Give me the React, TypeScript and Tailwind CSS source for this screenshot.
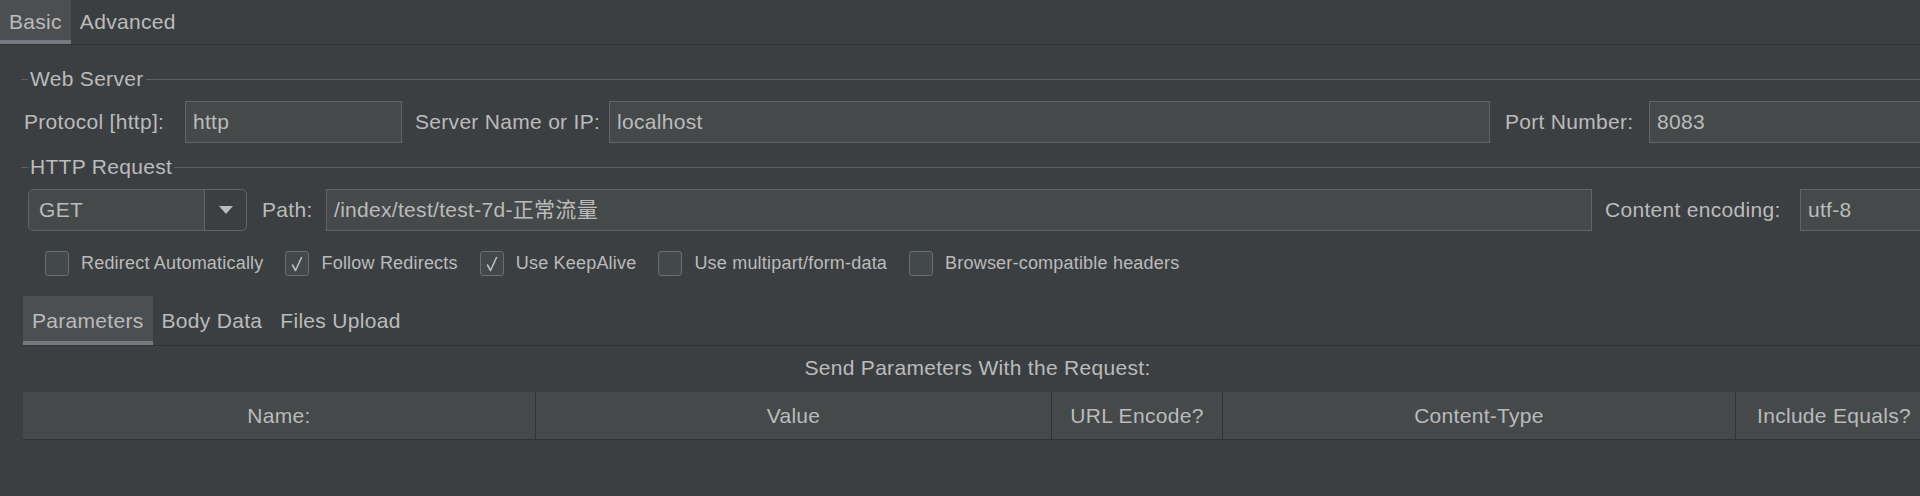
import React from 'react';

const line = 'bg-[#5d6062]';

function Field({ value, className = '' }: { value: string; className?: string }) {
  return (
    <div className={`h-[42px] border border-[#646464] bg-[#45494a] pl-[7px] flex items-center overflow-hidden whitespace-nowrap ${className}`}>
      {value}
    </div>
  );
}

function Titled({ title }: { title: string }) {
  return (
    <div className="flex items-center h-[24px] pl-[21px]">
      <div className={`w-[7px] h-px ${line}`} />
      <span className="px-[2px] leading-[24px]">{title}</span>
      <div className={`flex-1 h-px ${line}`} />
    </div>
  );
}

function Check({ label, checked }: { label: string; checked?: boolean }) {
  return (
    <div className="flex items-center gap-[12px]">
      <div className="w-[24px] h-[25px] rounded-[3px] border border-[#6b6e70] bg-[#43494a] flex items-center justify-center">
        {checked && (
          <svg width="16" height="18" viewBox="0 0 16 18" fill="none">
            <path d="M3.5 10 L6.5 15.5 L12.5 2.5" stroke="#bcbcbc" strokeWidth="1.6" strokeLinecap="round" strokeLinejoin="round" />
          </svg>
        )}
      </div>
      <span className="text-[18px] tracking-[0.2px]">{label}</span>
    </div>
  );
}

function Tab({ label, active }: { label: string; active?: boolean }) {
  return (
    <div
      className={`h-full px-[9px] flex items-center ${
        active ? 'bg-[#4b4f52] border-b-[4px] border-[#747a80] pt-[4px]' : ''
      }`}
    >
      {label}
    </div>
  );
}

export default function App() {
  const columns = [
    { name: 'Name:', w: 'w-[512px]' },
    { name: 'Value', w: 'w-[516px]' },
    { name: 'URL Encode?', w: 'w-[171px]' },
    { name: 'Content-Type', w: 'w-[513px]' },
    { name: 'Include Equals?', w: 'flex-1' },
  ];

  return (
    <div className="w-[1920px] h-[496px] overflow-hidden bg-[#3c3f41] text-[#bbbbbb] text-[21px] tracking-[0.3px] font-['Liberation_Sans','Noto_Sans_CJK_SC',sans-serif]">
      <div className="w-[1932px]">
        {/* top tabs */}
        <div className="h-[45px] flex border-b border-[#303234]">
          <Tab label="Basic" active />
          <Tab label="Advanced" />
        </div>

        <div className="mt-[22px]">
          <Titled title="Web Server" />
        </div>

        <div className="mt-[10px] flex items-center pl-[24px]">
          <span className="w-[161px]">Protocol [http]:</span>
          <Field value="http" className="w-[217px]" />
          <span className="w-[207px] pl-[13px]">Server Name or IP:</span>
          <Field value="localhost" className="w-[881px]" />
          <span className="w-[159px] pl-[15px]">Port Number:</span>
          <Field value="8083" className="flex-1" />
        </div>

        <div className="mt-[12px]">
          <Titled title="HTTP Request" />
        </div>

        <div className="mt-[10px] flex items-center pl-[28px]">
          <div className="w-[219px] h-[42px] rounded-[5px] border border-[#646464] flex overflow-hidden">
            <div className="flex-1 bg-[#45494a] pl-[10px] flex items-center">GET</div>
            <div className="w-[42px] border-l border-[#646464] flex items-center justify-center">
              <svg width="14" height="8" viewBox="0 0 14 8">
                <path d="M0 0 H14 L7 8 Z" fill="#bbbbbb" />
              </svg>
            </div>
          </div>
          <span className="w-[79px] pl-[15px]">Path:</span>
          <Field value="/index/test/test-7d-正常流量" className="w-[1266px]" />
          <span className="w-[208px] pl-[13px]">Content encoding:</span>
          <Field value="utf-8" className="flex-1" />
        </div>

        <div className="mt-[19px] flex items-center gap-[22px] pl-[45px]">
          <Check label="Redirect Automatically" />
          <Check label="Follow Redirects" checked />
          <Check label="Use KeepAlive" checked />
          <Check label="Use multipart/form-data" />
          <Check label="Browser-compatible headers" />
        </div>

        {/* parameters panel */}
        <div className="ml-[23px] mt-[19px]">
          <div className="h-[50px] flex border-b border-[#303234]">
            <Tab label="Parameters" active />
            <Tab label="Body Data" />
            <Tab label="Files Upload" />
          </div>

          <div className="mt-[10px] text-center leading-[24px]">Send Parameters With the Request:</div>

          <div className="mt-[12px] h-[48px] flex bg-[#45494a] border-b border-[#303234]">
            {columns.map((c, i) => (
              <div
                key={c.name}
                className={`${c.w} flex items-center justify-center ${i > 0 ? 'border-l border-[#303234]' : ''}`}
              >
                {c.name}
              </div>
            ))}
          </div>
        </div>
      </div>
    </div>
  );
}
